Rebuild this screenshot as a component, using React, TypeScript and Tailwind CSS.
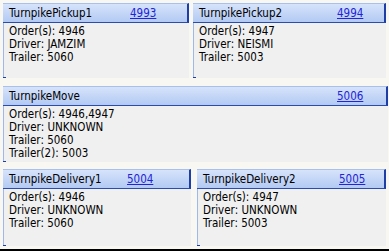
import React from "react";

type CardProps = {
  title: string;
  link: string;
  lines: string[];
  width: string;
  linkLeft: string;
  bodyH: string;
};

function Card({ title, link, lines, width, linkLeft, bodyH }: CardProps) {
  return (
    <div className={`${width} flex flex-col`}>
      <div className="relative h-[20px] border-t border-[#a9c0ec] border-b border-b-[#2a4cb0] border-r-2 border-r-[#1c3ea6] bg-gradient-to-b from-[#d6e3fb] to-[#b3caf3]">
        <span className="absolute left-[6px] top-[2px] text-[11.5px] leading-[14px] text-black">{title}</span>
        <span className={`absolute ${linkLeft} top-[2px] text-[11.5px] leading-[14px] text-[#2323d8] underline`}>{link}</span>
      </div>
      <div className={`relative ${bodyH} bg-[#f0f0f0] border-l border-[#9fb7ea] pl-[5px] pt-[2px]`}>
        {lines.map((l, i) => (
          <div key={i} className="text-[11.5px] leading-[13px] text-black">{l}</div>
        ))}
        <div className="absolute left-[-1px] bottom-0 w-[3px] h-[1px] bg-[#1c3ea6]" />
      </div>
    </div>
  );
}

export default function App() {
  return (
    <div
      className="w-[389px] h-[251px] bg-[#f8f7f2] border-b-2 border-black flex flex-col pl-[3px] pt-[3px]"
      style={{ fontFamily: "'DejaVu Sans Condensed', 'DejaVu Sans', sans-serif", fontStretch: "semi-condensed" }}
    >
      <div className="flex gap-[4px]">
        <Card title="TurnpikePickup1" link="4993" width="w-[186px]" linkLeft="left-[127px]" bodyH="h-[55px]" lines={["Order(s): 4946", "Driver: JAMZIM", "Trailer: 5060"]} />
        <Card title="TurnpikePickup2" link="4994" width="w-[193px]" linkLeft="left-[144px]" bodyH="h-[55px]" lines={["Order(s): 4947", "Driver: NEISMI", "Trailer: 5003"]} />
      </div>
      <div className="flex mt-[8px]">
        <Card title="TurnpikeMove" link="5006" width="w-[385px]" linkLeft="left-[334px]" bodyH="h-[56px]" lines={["Order(s): 4946,4947", "Driver: UNKNOWN", "Trailer: 5060", "Trailer(2): 5003"]} />
      </div>
      <div className="flex gap-[6px] mt-[7px]">
        <Card title="TurnpikeDelivery1" link="5004" width="w-[188px]" linkLeft="left-[124px]" bodyH="h-[57px]" lines={["Order(s): 4946", "Driver: UNKNOWN", "Trailer: 5060"]} />
        <Card title="TurnpikeDelivery2" link="5005" width="w-[189px]" linkLeft="left-[142px]" bodyH="h-[57px]" lines={["Order(s): 4947", "Driver: UNKNOWN", "Trailer: 5003"]} />
      </div>
    </div>
  );
}
